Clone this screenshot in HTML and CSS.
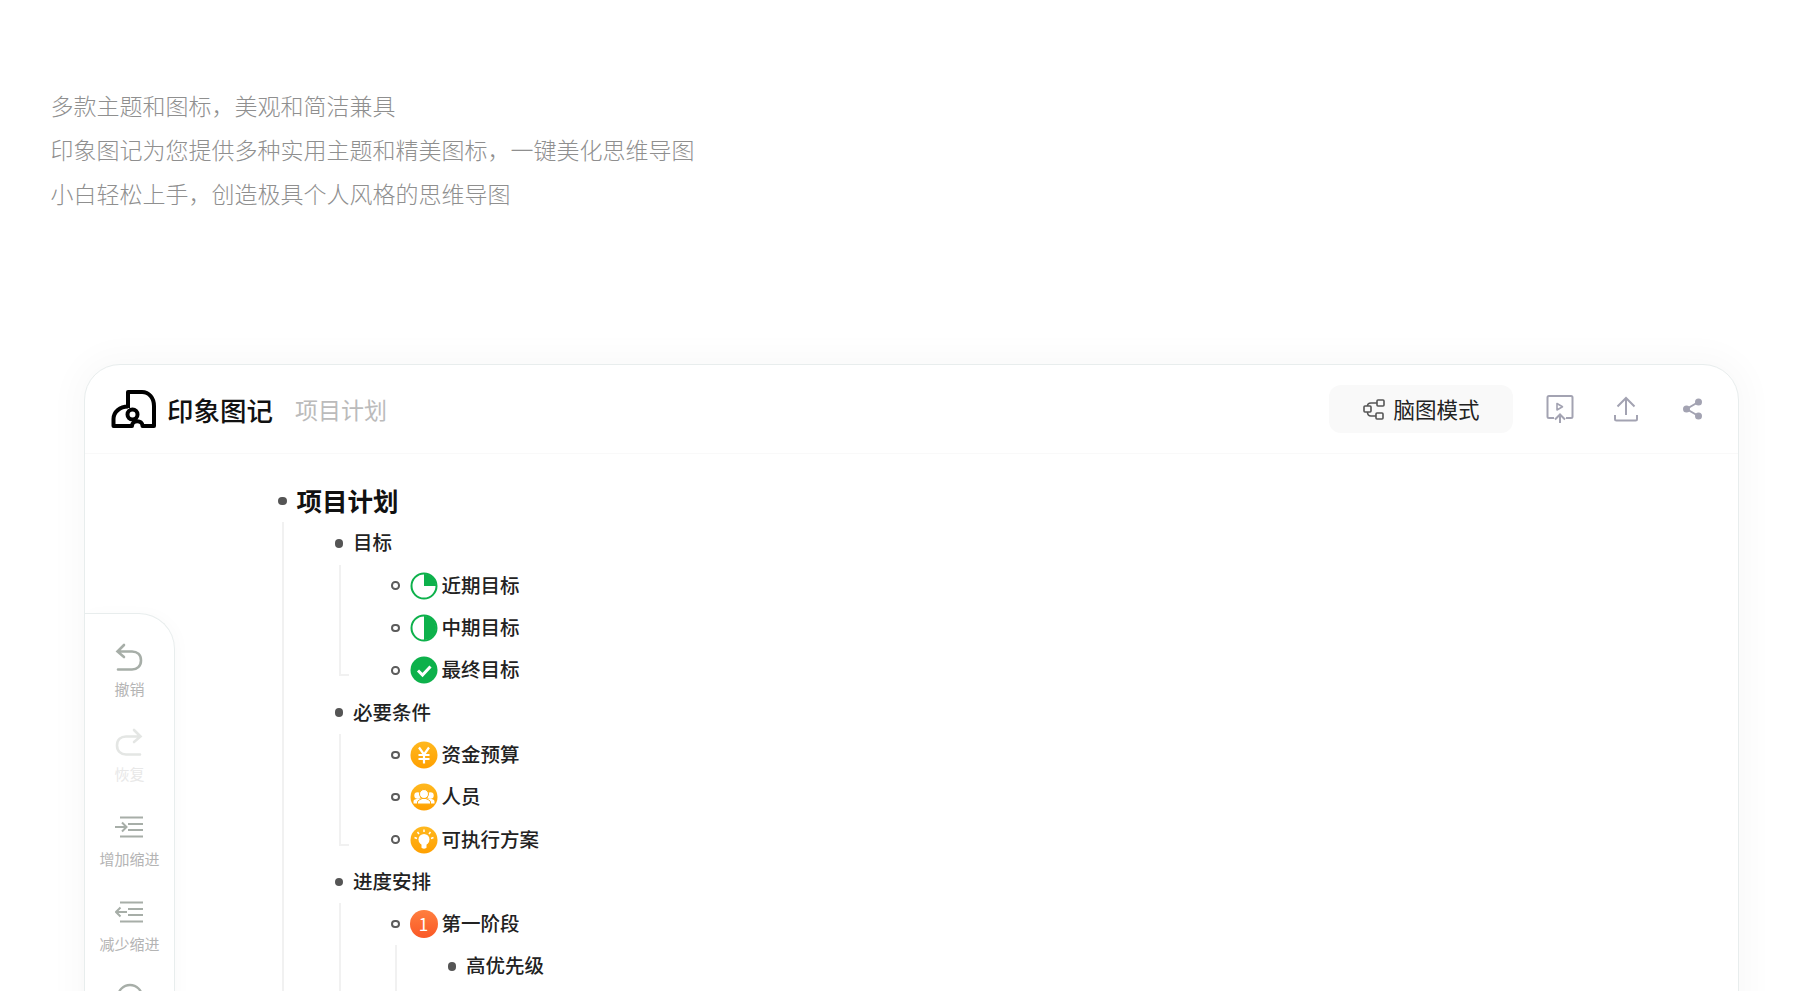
FILE: index.html
```html
<!DOCTYPE html>
<html lang="zh-CN">
<head>
  <meta charset="UTF-8" />
  <title>印象图记</title>
  <link rel="stylesheet" href="styles.css">
</head>
<body>
  <div class="intro">
    <p>多款主题和图标，美观和简洁兼具</p>
    <p>印象图记为您提供多种实用主题和精美图标，一键美化思维导图</p>
    <p>小白轻松上手，创造极具个人风格的思维导图</p>
  </div>

  <div class="card">
    <div class="topbar">
      <svg class="logo" viewBox="0 0 60 50" fill="none" stroke="#000" stroke-width="4">
        <path d="M22 22V6H36C43 6 48 12 48 20V40H36.500C36.500 33.500 26 33.500 26 40H7.500V33C7.500 26 14 20.500 22 20.500" stroke-linejoin="round"/>
        <circle cx="26.500" cy="28.500" r="5"/>
      </svg>
      <span class="brand">印象图记</span>
      <span class="doc-title">项目计划</span>
      <div class="topbar-right">
        <button class="mode-btn">
          <svg width="24" height="24" viewBox="0 0 24 24" fill="none" stroke="#555" stroke-width="1.6">
            <rect x="15" y="3" width="7" height="6" rx="1"/>
            <rect x="2" y="9" width="7" height="6" rx="1"/>
            <rect x="14" y="16" width="7" height="6" rx="1"/>
            <path d="M15 6H9C7 6 5.500 7 5.500 9M5.500 15C5.500 17.500 7 19 9 19H14"/>
          </svg>
          <span>脑图模式</span>
        </button>
        <svg class="tool-icon present" width="28" height="30" viewBox="0 0 28 30" fill="none" stroke="#a3a3b2" stroke-width="2">
          <path d="M8 24H3C2 24 1.500 23.500 1.500 22.500V3.500C1.500 2.500 2 2 3 2H25C26 2 26.500 2.500 26.500 3.500V22.500C26.500 23.500 26 24 25 24H20"/>
          <path d="M11 9.500V16L16.500 12.800Z" stroke-width="1.600" stroke-linejoin="round"/>
          <path d="M14 29V21M9 25.500L14 20.500L19 25.500"/>
        </svg>
        <svg class="tool-icon" width="26" height="26" viewBox="0 0 26 26" fill="none" stroke="#a3a3b2" stroke-width="2">
          <path d="M13 19V2M4.500 10.500L13 2L21.500 10.500"/>
          <path d="M2 19V23C2 24 2.500 24.500 3.500 24.500H22.500C23.500 24.500 24 24 24 23V19"/>
        </svg>
        <svg class="tool-icon share" width="22" height="24" viewBox="0 0 22 24" fill="#a3a3b2" stroke="#a3a3b2" stroke-width="2">
          <path d="M16.500 5L4.500 12L16.500 19" fill="none"/>
          <circle cx="16.500" cy="5" r="2.500"/>
          <circle cx="4.500" cy="12" r="2.500"/>
          <circle cx="16.500" cy="19" r="2.500"/>
        </svg>
      </div>
    </div>

    <div class="outline">
      <div class="row root"><i class="dot"></i><span>项目计划</span></div>
      <ul class="long">
        <li>
          <div class="row"><i class="dot"></i><span>目标</span></div>
          <ul class="foot">
            <li class="row"><i class="ring"></i>
              <svg class="mark" viewBox="0 0 28 28"><circle cx="14" cy="14" r="12.500" fill="#fff" stroke="#0db14b" stroke-width="2"/><path d="M14 14V2A12 12 0 0 1 26 14Z" fill="#0db14b"/></svg>
              <span>近期目标</span></li>
            <li class="row"><i class="ring"></i>
              <svg class="mark" viewBox="0 0 28 28"><circle cx="14" cy="14" r="12.500" fill="#fff" stroke="#0db14b" stroke-width="2"/><path d="M14 2A12 12 0 0 1 14 26Z" fill="#0db14b"/></svg>
              <span>中期目标</span></li>
            <li class="row"><i class="ring"></i>
              <svg class="mark" viewBox="0 0 28 28"><circle cx="14" cy="14" r="13.500" fill="#0db14b"/><path d="M8 14.500L12.500 19L20.500 10.500" fill="none" stroke="#fff" stroke-width="3"/></svg>
              <span>最终目标</span></li>
          </ul>
        </li>
        <li>
          <div class="row"><i class="dot"></i><span>必要条件</span></div>
          <ul class="foot">
            <li class="row"><i class="ring"></i>
              <svg class="mark" viewBox="0 0 28 28">
                <defs><linearGradient id="amber" x1="0" y1="0" x2="0" y2="1"><stop offset="0" stop-color="#ffb81f"/><stop offset="1" stop-color="#ffa000"/></linearGradient></defs>
                <circle cx="14" cy="14" r="13.500" fill="url(#amber)"/><path d="M9 6.500L14 13.500L19 6.500M14 13.500V22.500M8.500 14H19.500M8.500 18H19.500" fill="none" stroke="#fff" stroke-width="2.200"/></svg>
              <span>资金预算</span></li>
            <li class="row"><i class="ring"></i>
              <svg class="mark" viewBox="0 0 28 28"><circle cx="14" cy="14" r="13.500" fill="url(#amber)"/>
                <circle cx="7.500" cy="12.500" r="3.200" fill="#fff"/><circle cx="20.500" cy="12.500" r="3.200" fill="#fff"/>
                <path d="M3.500 20.500V18.500C3.500 16.500 6 16 8 15.500H20C22 16 24.500 16.500 24.500 18.500V20.500Z" fill="#fff"/>
                <circle cx="14" cy="11" r="4.500" fill="#fff" stroke="#ffac10"/>
                <path d="M7.500 21V19C7.500 17 11 16.500 12 15.500H16C17 16.500 20.500 17 20.500 19V21Z" fill="#fff" stroke="#ffac10"/></svg>
              <span>人员</span></li>
            <li class="row"><i class="ring"></i>
              <svg class="mark" viewBox="0 0 28 28"><circle cx="14" cy="14" r="13.500" fill="url(#amber)"/><circle cx="14" cy="13.500" r="5.500" fill="#fff"/><path d="M11.500 17H16.500V21.500C16.500 23 11.500 23 11.500 21.500Z" fill="#fff"/><path d="M14 3.500V6M7.500 6L9 8M20.500 6L19 8M4.500 11.500L7 12.500M23.500 11.500L21 12.500" stroke="#fff" stroke-width="1.500"/></svg>
              <span>可执行方案</span></li>
          </ul>
        </li>
        <li>
          <div class="row"><i class="dot"></i><span>进度安排</span></div>
          <ul class="long">
            <li>
              <div class="row"><i class="ring"></i>
                <span class="mark num">1</span>
                <span>第一阶段</span></div>
              <ul class="long">
                <li class="row"><i class="dot"></i><span>高优先级</span></li>
              </ul>
            </li>
          </ul>
        </li>
      </ul>
    </div>

    <div class="sidebar">
      <div class="side-item">
        <div class="side-icon">
          <svg width="28" height="28" viewBox="0 0 28 28" fill="none" stroke="#a7aea8" stroke-width="2.600" stroke-linecap="round">
            <path d="M9 2L2.500 8.500L9 14M3 8.500H17C22 8.500 26 11.500 26 17.500C26 23 22 26.500 17 26.500H3"/>
          </svg>
        </div>
        <span>撤销</span>
      </div>
      <div class="side-item off">
        <div class="side-icon">
          <svg width="28" height="28" viewBox="0 0 28 28" fill="none" stroke="#e4e6e4" stroke-width="2.600" stroke-linecap="round">
            <path d="M19 2L25.500 8.500L19 14M25 8.500H11C6 8.500 2 11.500 2 17.500C2 23 6 26.500 11 26.500H25"/>
          </svg>
        </div>
        <span>恢复</span>
      </div>
      <div class="side-item">
        <div class="side-icon">
          <svg width="28" height="22" viewBox="0 0 28 22" fill="none" stroke="#a7aea8" stroke-width="2">
            <path d="M5 1.500H28M13 8H28M13 14H28M5 20.500H28M0 11H11M7 6.500L11.500 11L7 15.500"/>
          </svg>
        </div>
        <span>增加缩进</span>
      </div>
      <div class="side-item">
        <div class="side-icon">
          <svg width="28" height="22" viewBox="0 0 28 22" fill="none" stroke="#a7aea8" stroke-width="2">
            <path d="M5 1.500H28M13 8H28M13 14H28M5 20.500H28M1 11H12M5.500 6.500L1 11L5.500 15.500"/>
          </svg>
        </div>
        <span>减少缩进</span>
      </div>
      <div class="side-item">
        <div class="side-icon">
          <svg width="28" height="28" viewBox="0 0 28 28" fill="none" stroke="#a7aea8" stroke-width="2.400">
            <circle cx="14" cy="14" r="12"/>
          </svg>
        </div>
      </div>
    </div>
  </div>
</body>
</html>
```

FILE: styles.css
```css
html, body {
  margin: 0;
  padding: 0;
  height: 991px;
  overflow: hidden;
  background: #fff;
  font-family: "Noto Sans CJK SC", "Noto Sans", sans-serif;
}

.intro {
  padding: 83px 0 0 50.500px;
  color: #8f8f8f;
  font-size: 23px;
  font-weight: 300;
  line-height: 44px;
}

.intro p {
  margin: 0;
}

.card {
  position: relative;
  margin: 149px 0 0 84px;
  width: 1655px;
  height: 800px;
  box-sizing: border-box;
  border: 1px solid #e8eded;
  border-radius: 36px;
  background: #fff;
  box-shadow: 0 0 30px 12px rgba(0, 0, 0, 0.022);
}

.topbar {
  display: flex;
  align-items: center;
  height: 88px;
  padding: 0 34px 0 21px;
  border-bottom: 1px solid #f9f9f9;
}

.logo {
  width: 60px;
  height: 50px;
  margin-top: 4px;
}

.brand {
  margin-left: 1px;
  font-size: 26.500px;
  font-weight: 500;
  color: #111;
}

.doc-title {
  margin-left: 22px;
  font-size: 23px;
  color: #bbb;
}

.topbar-right {
  display: flex;
  align-items: center;
  margin-left: auto;
}

.mode-btn {
  display: flex;
  align-items: center;
  justify-content: center;
  gap: 7px;
  width: 184px;
  height: 48px;
  border: none;
  border-radius: 12px;
  background: #f9f9f9;
  color: #222;
  font-family: inherit;
  font-size: 21.500px;
}

.mode-btn span {
  padding-bottom: 2px;
}

.tool-icon {
  margin-left: 39px;
}

.tool-icon.present {
  margin-left: 33px;
}

.tool-icon.share {
  margin-left: 43px;
}

.outline {
  padding: 26px 0 0 192px;
  color: #222;
  font-size: 19.500px;
  font-weight: 500;
}

.outline ul {
  position: relative;
  list-style: none;
  margin: 0 0 0 5px;
  padding: 0 0 0 51.500px;
}

/* guide lines */
.outline ul::before {
  content: "";
  position: absolute;
  left: 0;
  top: 0;
  bottom: 15px;
  width: 2px;
  background: #f1f1f1;
}

.outline ul.foot::after {
  content: "";
  position: absolute;
  left: 0;
  bottom: 15px;
  width: 10px;
  height: 2px;
  background: #f1f1f1;
}

.outline ul.long::before {
  bottom: -300px;
}

.row {
  display: flex;
  align-items: center;
  height: 42.300px;
}

.row span {
  padding-bottom: 3px;
}

.row.root {
  font-size: 25.500px;
  font-weight: 700;
  color: #111;
}

.row.root span {
  padding-bottom: 4px;
}

.dot {
  flex: none;
  width: 8.500px;
  height: 8.500px;
  margin: 0 10px 0 1px;
  border-radius: 50%;
  background: #555;
}

.ring {
  flex: none;
  width: 4.500px;
  height: 4.500px;
  margin: 0 10px 0 1px;
  border: 2.300px solid #5c5c5c;
  border-radius: 50%;
}

.mark {
  flex: none;
  width: 28px;
  height: 28px;
  margin-right: 4px;
}

.row .num {
  padding: 0;
  border-radius: 50%;
  background: linear-gradient(#ff7f3f, #fa5826);
  color: #fff;
  font-size: 17px;
  font-weight: 400;
  line-height: 28px;
  text-align: center;
}

.sidebar {
  position: absolute;
  left: -1px;
  top: 248px;
  bottom: -1px;
  display: flex;
  flex-direction: column;
  align-items: center;
  width: 91px;
  padding-top: 29px;
  box-sizing: border-box;
  border: 1px solid #e8eded;
  border-bottom: none;
  border-radius: 0 36px 0 0;
  background: #fff;
  box-shadow: 4px 0 16px rgba(0, 0, 0, 0.02);
}

.side-item {
  display: flex;
  flex-direction: column;
  align-items: center;
  height: 85px;
  color: #b4b4b4;
  font-size: 15px;
  line-height: 20px;
}

.side-icon {
  display: flex;
  align-items: center;
  justify-content: center;
  height: 28px;
  margin-bottom: 8px;
}

.side-item.off {
  color: #e8e8e8;
}
```
